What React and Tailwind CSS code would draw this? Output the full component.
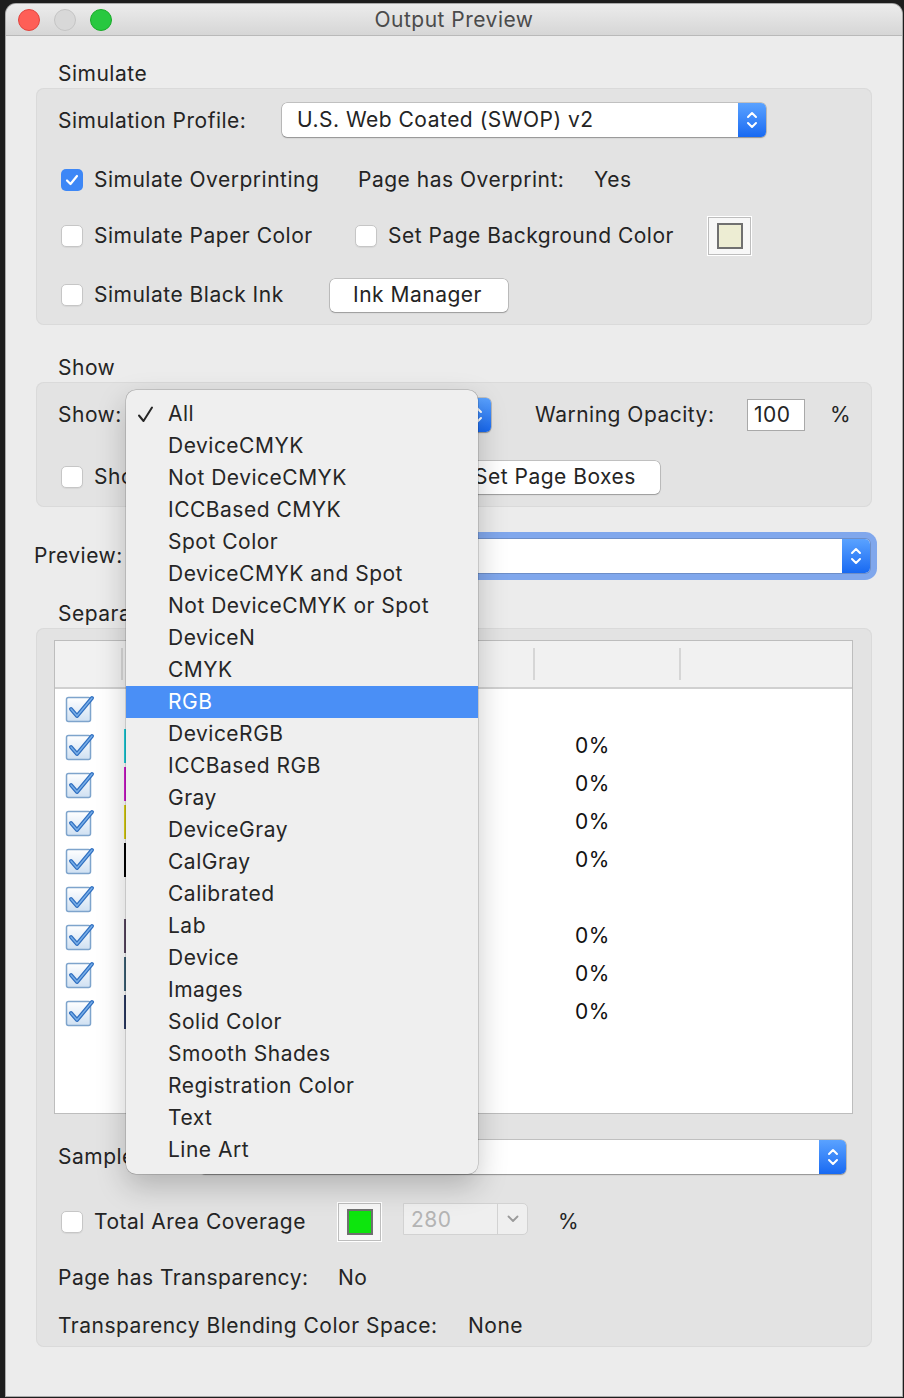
import React from "react";

const menuItems = [
  "All",
  "DeviceCMYK",
  "Not DeviceCMYK",
  "ICCBased CMYK",
  "Spot Color",
  "DeviceCMYK and Spot",
  "Not DeviceCMYK or Spot",
  "DeviceN",
  "CMYK",
  "RGB",
  "DeviceRGB",
  "ICCBased RGB",
  "Gray",
  "DeviceGray",
  "CalGray",
  "Calibrated",
  "Lab",
  "Device",
  "Images",
  "Solid Color",
  "Smooth Shades",
  "Registration Color",
  "Text",
  "Line Art",
];

const plates = [
  { id: "process", bar: null, pct: "" },
  { id: "cyan", bar: "bg-[#1fcfdc]", pct: "0%" },
  { id: "magenta", bar: "bg-[#d21ccf]", pct: "0%" },
  { id: "yellow", bar: "bg-[#ddd215]", pct: "0%" },
  { id: "black", bar: "bg-[#000000]", pct: "0%" },
  { id: "spot", bar: null, pct: "" },
  { id: "spot1", bar: "bg-[#5a4963]", pct: "0%" },
  { id: "spot2", bar: "bg-[#3f6479]", pct: "0%" },
  { id: "spot3", bar: "bg-[#2d3c66]", pct: "0%" },
];

function Checkbox({ checked }) {
  if (checked) {
    return (
      <span className="flex h-[22px] w-[22px] shrink-0 items-center justify-center rounded-[5px] bg-[#3d87f6]">
        <svg width="14" height="12" viewBox="0 0 14 12" fill="none">
          <path d="M2 6.5 L5.5 10 L12 2" stroke="white" strokeWidth="2.2" strokeLinecap="round" strokeLinejoin="round" />
        </svg>
      </span>
    );
  }
  return (
    <span className="h-[22px] w-[22px] shrink-0 rounded-[5px] border border-[#c6c6c6] bg-white shadow-[0_1px_1px_rgba(0,0,0,0.06)]" />
  );
}

function Stepper({ w = "w-[28px]" }) {
  return (
    <span className={`flex h-full ${w} shrink-0 items-center justify-center rounded-r-[5px] bg-gradient-to-b from-[#5aa2ff] to-[#1769f2]`}>
      <svg width="12" height="22" viewBox="0 0 12 22" fill="none">
        <path d="M2 8 L6 4 L10 8" stroke="white" strokeWidth="2" strokeLinecap="round" strokeLinejoin="round" />
        <path d="M2 14 L6 18 L10 14" stroke="white" strokeWidth="2" strokeLinecap="round" strokeLinejoin="round" />
      </svg>
    </span>
  );
}

function Popup({ width, text, stepW, ring }) {
  return (
    <div
      className={`flex h-[34px] ${width} shrink-0 items-center rounded-[5px] bg-white ${
        ring
          ? "shadow-[0_0_0_1px_rgba(0,0,0,0.15),0_0_0_7px_#80a7ec]"
          : "shadow-[0_0_0_0.5px_rgba(0,0,0,0.3),0_1px_1.5px_rgba(0,0,0,0.25)]"
      }`}
    >
      <span className="flex-1 truncate pl-[15px]">{text}</span>
      <Stepper w={stepW} />
    </div>
  );
}

function ColorWell({ fill }) {
  return (
    <div className="flex h-[38px] w-[43px] shrink-0 items-center justify-center border border-[#bdbdbd] bg-[#f7f7f7] shadow-[0_0_0_1px_#ffffff]">
      <span className={`h-[26px] w-[26px] border-2 border-[#707070] ${fill}`} />
    </div>
  );
}

function Button({ width, children, pl }) {
  return (
    <div
      className={`flex h-[33px] ${width} shrink-0 items-center rounded-[5px] bg-white ${pl} shadow-[0_0_0_0.5px_rgba(0,0,0,0.3),0_1px_1.5px_rgba(0,0,0,0.2)]`}
    >
      {children}
    </div>
  );
}

function TableCheck() {
  return (
    <svg width="30" height="30" viewBox="0 0 30 30" fill="none">
      <defs>
        <linearGradient id="tcg" x1="0" y1="0" x2="0" y2="1">
          <stop offset="0" stopColor="#ffffff" />
          <stop offset="1" stopColor="#cfe0f2" />
        </linearGradient>
      </defs>
      <rect x="1.5" y="4.5" width="24" height="24" rx="2" fill="url(#tcg)" stroke="#7ea4cc" strokeWidth="1.5" />
      <path d="M6 16 L12 23 L27 5" stroke="#2f6fc0" strokeWidth="4" strokeLinecap="round" strokeLinejoin="round" />
      <path d="M6 16 L12 23 L27 5" stroke="#78aee8" strokeWidth="1.5" strokeLinecap="round" strokeLinejoin="round" />
    </svg>
  );
}

function SectionLabel({ children, className = "" }) {
  return <div className={`h-[24px] pl-[22px] leading-[24px] ${className}`}>{children}</div>;
}

function Group({ children, className = "" }) {
  return (
    <div className={`rounded-[8px] bg-[#e3e3e3] shadow-[inset_0_0_0_1px_#dadada] ${className}`}>
      {children}
    </div>
  );
}

function DropdownMenu() {
  return (
    <div className="absolute left-[120px] top-[386px] w-[352px] rounded-[10px] bg-[#efefef] py-[8px] shadow-[0_0_0_0.5px_rgba(0,0,0,0.25),0_12px_30px_rgba(0,0,0,0.22)]">
      {menuItems.map((item, i) => {
        const active = item === "RGB";
        return (
          <div
            key={item}
            className={`relative flex h-[32px] items-center pl-[42px] ${
              active ? "bg-[#4a8ff6] text-white" : "text-[#262626]"
            }`}
          >
            {i === 0 ? (
              <svg className="absolute left-[11px] top-[8px]" width="17" height="17" viewBox="0 0 17 17" fill="none">
                <path d="M2 9.5 L6.5 15 L15 1.5" stroke="#262626" strokeWidth="2" strokeLinecap="round" strokeLinejoin="round" />
              </svg>
            ) : null}
            {item}
          </div>
        );
      })}
    </div>
  );
}

export default function App() {
  return (
    <div
      className="min-h-screen bg-[#1d1d1d] pl-[6px] pr-[2px] pt-[4px] text-[21px] leading-[24px] tracking-[0.5px] text-[#242424]"
      style={{ fontFamily: "Inter, 'Noto Sans', sans-serif" }}
    >
      <div className="relative flex w-[896px] flex-col overflow-hidden rounded-t-[10px] bg-[#ececec] shadow-[0_0_0_1px_#a9a9a9]">
        {/* title bar */}
        <div className="relative flex h-[32px] items-center justify-center border-b border-[#b9b9b9] bg-gradient-to-b from-[#ececec] to-[#d6d6d6]">
          <div className="absolute left-[12px] top-[5px] flex gap-[14px]">
            <span className="h-[22px] w-[22px] rounded-full border border-[#e0443e] bg-[#fe5f57]" />
            <span className="h-[22px] w-[22px] rounded-full border border-[#c4c4c4] bg-[#d8d8d8]" />
            <span className="h-[22px] w-[22px] rounded-full border border-[#1aab29] bg-[#28c840]" />
          </div>
          <span className="text-[#4b4b4b]">Output Preview</span>
        </div>

        <div className="flex flex-col px-[30px] pb-[49px]">
          {/* Simulate */}
          <SectionLabel className="mt-[26px]">Simulate</SectionLabel>
          <Group className="mt-[2px] pb-[13px] pt-[15px]">
            <div className="flex h-[34px] items-center pl-[22px]">
              <span className="w-[224px] pt-[2px]">Simulation Profile:</span>
              <Popup width="w-[484px]" text="U.S. Web Coated (SWOP) v2" />
            </div>
            <div className="mt-[26px] flex h-[34px] items-center pl-[25px]">
              <div className="flex w-[297px] items-center gap-[11px]">
                <Checkbox checked />
                <span>Simulate Overprinting</span>
              </div>
              <span className="w-[236px]">Page has Overprint:</span>
              <span>Yes</span>
            </div>
            <div className="mt-[22px] flex h-[34px] items-center pl-[25px]">
              <div className="flex w-[294px] items-center gap-[11px]">
                <Checkbox />
                <span>Simulate Paper Color</span>
              </div>
              <div className="flex w-[353px] items-center gap-[11px]">
                <Checkbox />
                <span>Set Page Background Color</span>
              </div>
              <ColorWell fill="bg-[#ededd3]" />
            </div>
            <div className="mt-[25px] flex h-[34px] items-center pl-[25px]">
              <div className="flex w-[269px] items-center gap-[11px]">
                <Checkbox />
                <span>Simulate Black Ink</span>
              </div>
              <Button width="w-[178px]" pl="pl-[23px]">Ink Manager</Button>
            </div>
          </Group>

          {/* Show */}
          <SectionLabel className="mt-[31px]">Show</SectionLabel>
          <Group className="mt-[2px] pb-[13px] pt-[16px]">
            <div className="flex h-[34px] items-center pl-[22px]">
              <span className="w-[76px]">Show:</span>
              <Popup width="w-[357px]" text="" />
              <span className="ml-[44px] w-[212px]">Warning Opacity:</span>
              <div className="flex h-[32px] w-[58px] items-center border border-[#a9a9a9] bg-white pl-[6px]">100</div>
              <span className="ml-[25px]">%</span>
            </div>
            <div className="mt-[28px] flex h-[34px] items-center pl-[25px]">
              <div className="flex w-[383px] items-center gap-[11px]">
                <Checkbox />
                <span>Show</span>
              </div>
              <Button width="w-[216px]" pl="pl-[30px]">Set Page Boxes</Button>
            </div>
          </Group>

          {/* Preview */}
          <div className="ml-[-2px] mt-[32px] flex h-[34px] items-center">
            <span className="w-[100px]">Preview:</span>
            <Popup width="w-[736px]" text="" ring />
          </div>

          {/* Separations */}
          <SectionLabel className="mt-[29px]">Separations</SectionLabel>
          <Group className="mt-[2px] pb-[9px] pt-[12px]">
            <div className="ml-[18px] flex h-[474px] w-[799px] flex-col border border-[#bdbdbd] bg-white">
              <div className="flex h-[48px] shrink-0 border-b-2 border-[#d0d0d0] bg-[#f1f1f1]">
                <div className="w-[66px]" />
                <div className="my-[7px] w-[2px] bg-[#d6d6d6]" />
                <div className="w-[410px]" />
                <div className="my-[7px] w-[2px] bg-[#d6d6d6]" />
                <div className="w-[144px]" />
                <div className="my-[7px] w-[2px] bg-[#d6d6d6]" />
                <div className="flex-1" />
              </div>
              {plates.map((p) => (
                <div key={p.id} className="flex h-[38px] items-center">
                  <div className="flex w-[67px] items-center pl-[10px]">
                    <TableCheck />
                  </div>
                  <div className={`ml-[2px] h-[34px] w-[4px] ${p.bar || ""}`} />
                  <span className="w-[447px]" />
                  <span className="text-[#111]">{p.pct}</span>
                </div>
              ))}
            </div>

            <div className="mt-[26px] flex h-[34px] items-center pl-[22px]">
              <span className="w-[142px]">Sample</span>
              <Popup width="w-[646px]" text="" stepW="w-[27px]" />
            </div>

            <div className="mt-[29px] flex h-[38px] items-center pl-[25px]">
              <div className="flex w-[277px] items-center gap-[11px]">
                <Checkbox />
                <span>Total Area Coverage</span>
              </div>
              <ColorWell fill="bg-[#0de50d]" />
              <div className="mb-[6px] ml-[22px] flex h-[32px] w-[125px] items-center rounded-r-[5px] border border-[#d2d2d2] bg-[#efefef]">
                <span className="flex-1 pl-[7px] pt-[2px] text-[#b4b4b4]">280</span>
                <span className="flex h-full w-[30px] items-center justify-center border-l border-[#d2d2d2]">
                  <svg width="12" height="8" viewBox="0 0 12 8" fill="none">
                    <path d="M1.5 1.5 L6 6 L10.5 1.5" stroke="#9a9a9a" strokeWidth="1.8" strokeLinecap="round" strokeLinejoin="round" />
                  </svg>
                </span>
              </div>
              <span className="ml-[30px]">%</span>
            </div>

            <div className="mt-[25px] flex h-[24px] items-center pl-[22px]">
              <span className="w-[280px]">Page has Transparency:</span>
              <span>No</span>
            </div>
            <div className="mt-[24px] flex h-[24px] items-center pl-[22px]">
              <span className="w-[410px]">Transparency Blending Color Space:</span>
              <span>None</span>
            </div>
          </Group>
        </div>

        <DropdownMenu />
      </div>
    </div>
  );
}
